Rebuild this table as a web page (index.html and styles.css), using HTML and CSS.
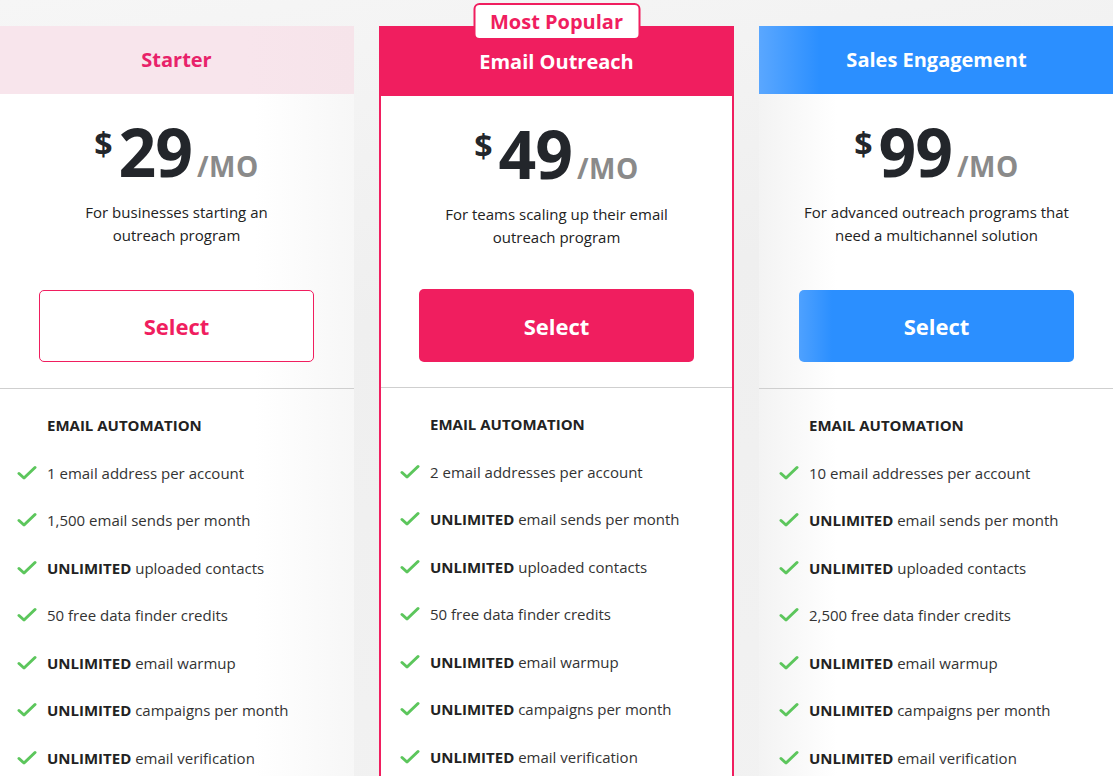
FILE: index.html
```html
<!DOCTYPE html>
<html lang="en">
<head>
    <meta charset="UTF-8">
    <title>Pricing</title>
    <link rel="stylesheet" href="styles.css">
</head>
<body>

<div class="plans">
    <!-- Starter -->
    <div class="plan plan-starter">
        <div class="plan-head">Starter</div>
        <div class="plan-top">
            <div class="price"><span class="cur">$</span><span class="amount">29</span><span class="per">/MO</span></div>
            <p class="desc">For businesses starting an<br>outreach program</p>
            <a class="btn btn-outline" href="#">Select</a>
        </div>
        <ul class="features">
            <li class="feat-title">EMAIL AUTOMATION</li>
            <li><svg class="check" viewBox="0 0 20 16"><polyline points="2,8.5 7,13 18,2.5"/></svg>1 email address per account</li>
            <li><svg class="check" viewBox="0 0 20 16"><polyline points="2,8.5 7,13 18,2.5"/></svg>1,500 email sends per month</li>
            <li><svg class="check" viewBox="0 0 20 16"><polyline points="2,8.5 7,13 18,2.5"/></svg><b>UNLIMITED</b>&nbsp;uploaded contacts</li>
            <li><svg class="check" viewBox="0 0 20 16"><polyline points="2,8.5 7,13 18,2.5"/></svg>50 free data finder credits</li>
            <li><svg class="check" viewBox="0 0 20 16"><polyline points="2,8.5 7,13 18,2.5"/></svg><b>UNLIMITED</b>&nbsp;email warmup</li>
            <li><svg class="check" viewBox="0 0 20 16"><polyline points="2,8.5 7,13 18,2.5"/></svg><b>UNLIMITED</b>&nbsp;campaigns per month</li>
            <li><svg class="check" viewBox="0 0 20 16"><polyline points="2,8.5 7,13 18,2.5"/></svg><b>UNLIMITED</b>&nbsp;email verification</li>
        </ul>
    </div>

    <!-- Email Outreach -->
    <div class="plan plan-popular">
        <div class="badge">Most Popular</div>
        <div class="plan-head">Email Outreach</div>
        <div class="plan-top">
            <div class="price"><span class="cur">$</span><span class="amount">49</span><span class="per">/MO</span></div>
            <p class="desc">For teams scaling up their email<br>outreach program</p>
            <a class="btn btn-pink" href="#">Select</a>
        </div>
        <ul class="features">
            <li class="feat-title">EMAIL AUTOMATION</li>
            <li><svg class="check" viewBox="0 0 20 16"><polyline points="2,8.5 7,13 18,2.5"/></svg>2 email addresses per account</li>
            <li><svg class="check" viewBox="0 0 20 16"><polyline points="2,8.5 7,13 18,2.5"/></svg><b>UNLIMITED</b>&nbsp;email sends per month</li>
            <li><svg class="check" viewBox="0 0 20 16"><polyline points="2,8.5 7,13 18,2.5"/></svg><b>UNLIMITED</b>&nbsp;uploaded contacts</li>
            <li><svg class="check" viewBox="0 0 20 16"><polyline points="2,8.5 7,13 18,2.5"/></svg>50 free data finder credits</li>
            <li><svg class="check" viewBox="0 0 20 16"><polyline points="2,8.5 7,13 18,2.5"/></svg><b>UNLIMITED</b>&nbsp;email warmup</li>
            <li><svg class="check" viewBox="0 0 20 16"><polyline points="2,8.5 7,13 18,2.5"/></svg><b>UNLIMITED</b>&nbsp;campaigns per month</li>
            <li><svg class="check" viewBox="0 0 20 16"><polyline points="2,8.5 7,13 18,2.5"/></svg><b>UNLIMITED</b>&nbsp;email verification</li>
        </ul>
    </div>

    <!-- Sales Engagement -->
    <div class="plan plan-sales">
        <div class="plan-head">Sales Engagement</div>
        <div class="plan-top">
            <div class="price"><span class="cur">$</span><span class="amount">99</span><span class="per">/MO</span></div>
            <p class="desc">For advanced outreach programs that<br>need a multichannel solution</p>
            <a class="btn btn-blue" href="#">Select</a>
        </div>
        <ul class="features">
            <li class="feat-title">EMAIL AUTOMATION</li>
            <li><svg class="check" viewBox="0 0 20 16"><polyline points="2,8.5 7,13 18,2.5"/></svg>10 email addresses per account</li>
            <li><svg class="check" viewBox="0 0 20 16"><polyline points="2,8.5 7,13 18,2.5"/></svg><b>UNLIMITED</b>&nbsp;email sends per month</li>
            <li><svg class="check" viewBox="0 0 20 16"><polyline points="2,8.5 7,13 18,2.5"/></svg><b>UNLIMITED</b>&nbsp;uploaded contacts</li>
            <li><svg class="check" viewBox="0 0 20 16"><polyline points="2,8.5 7,13 18,2.5"/></svg>2,500 free data finder credits</li>
            <li><svg class="check" viewBox="0 0 20 16"><polyline points="2,8.5 7,13 18,2.5"/></svg><b>UNLIMITED</b>&nbsp;email warmup</li>
            <li><svg class="check" viewBox="0 0 20 16"><polyline points="2,8.5 7,13 18,2.5"/></svg><b>UNLIMITED</b>&nbsp;campaigns per month</li>
            <li><svg class="check" viewBox="0 0 20 16"><polyline points="2,8.5 7,13 18,2.5"/></svg><b>UNLIMITED</b>&nbsp;email verification</li>
        </ul>
    </div>
</div>

</body>
</html>
```

FILE: styles.css
```css
/* General */
html, body {
    margin: 0;
    height: 100%;
    overflow: hidden;
}
body {
    background: linear-gradient(170deg, #f6f6f6 0%, #efefef 40%, #f2f2f2 100%);
    font-family: "Open Sans", "Noto Sans", sans-serif;
    color: #222;
}

.plans {
    display: flex;
    gap: 25px;
    margin-left: -1px;
    padding-top: 26px;
}

/* Card */
.plan {
    position: relative;
    flex: 0 0 355px;
    box-sizing: border-box;
    background: #fff;
}
.plan-starter {
    background: linear-gradient(90deg, #fff 0%, #fff 72%, #f7f7f7 100%);
}
.plan-sales {
    background: linear-gradient(90deg, #f3f3f3 0%, #fff 22%, #fff 100%);
}
.plan-popular {
    border: 2px solid #f01e5f;
    border-top: 0;
    padding-top: 2px;
    background: #fff;
}
.plan-popular::before {
    content: "";
    position: absolute;
    top: 0;
    left: -2px;
    right: -2px;
    height: 2px;
    background: #f01e5f;
}

.plan-head {
    height: 68px;
    display: flex;
    align-items: center;
    justify-content: center;
    padding-bottom: 1px;
    box-sizing: border-box;
    font-size: 20px;
    font-weight: 700;
}
.plan-starter .plan-head {
    background: linear-gradient(90deg, #f8e5ec 0%, #f8e5ec 70%, #f6e4ea 100%);
    color: #e8226a;
}
.plan-popular .plan-head {
    background: #f01e5f;
    color: #fff;
}
.plan-sales .plan-head {
    background: linear-gradient(90deg, #5aa7ff 0%, #2b8fff 17%, #2b8fff 100%);
    color: #fff;
}

/* Most popular badge */
.badge {
    position: absolute;
    top: -23px;
    left: 50%;
    transform: translateX(-50%);
    width: 167px;
    height: 37px;
    box-sizing: border-box;
    border: 2px solid #f01e5f;
    border-radius: 6px;
    background: #fff;
    color: #f01e5f;
    font-size: 20px;
    font-weight: 700;
    display: flex;
    align-items: center;
    justify-content: center;
    z-index: 2;
}

/* Price area */
.plan-top {
    padding: 24px 0 26px;
    text-align: center;
    border-bottom: 1px solid #cfcfcf;
}
.plan-popular .plan-top {
    padding-bottom: 25px;
}
.price {
    line-height: 1;
    white-space: nowrap;
    color: #23262b;
    font-weight: 700;
}
.cur {
    display: inline-block;
    vertical-align: top;
    padding-top: 10px;
    margin-right: 6px;
    font-size: 32px;
}
.amount {
    font-size: 66px;
    letter-spacing: -1px;
}
.per {
    margin-left: 5px;
    font-size: 28px;
    letter-spacing: 0.5px;
    color: #8a8a8a;
}
.desc {
    margin: 17px 0 43px;
    font-size: 15px;
    line-height: 23px;
    color: #222;
}
.plan-popular .desc {
    margin-bottom: 40px;
}
.btn {
    display: flex;
    align-items: center;
    justify-content: center;
    width: 275px;
    height: 72px;
    box-sizing: border-box;
    margin: 0 auto;
    border-radius: 5px;
    font-size: 22px;
    font-weight: 700;
    text-decoration: none;
}
.btn-outline {
    border: 1px solid #f01e5f;
    color: #f01e5f;
    background: #fff;
}
.btn-pink {
    height: 73px;
    background: #f01e5f;
    color: #fff;
}
.btn-blue {
    background: linear-gradient(90deg, #4ea1ff 0%, #2b8fff 12%, #2b8fff 100%);
    color: #fff;
}

/* Features */
.features {
    list-style: none;
    margin: 0;
    padding: 12.5px 0 0 18px;
}
.features li {
    display: flex;
    align-items: center;
    height: 47.5px;
    font-size: 15px;
    color: #333;
}
.features li b {
    color: #222;
    font-weight: 700;
}
.features .feat-title {
    padding-left: 30px;
    font-weight: 700;
    color: #222;
}
.plan-popular .features {
    padding-left: 19px;
}
.plan-sales .features {
    padding-left: 20px;
}
.check {
    width: 20px;
    height: 16px;
    margin-right: 10px;
    flex: 0 0 20px;
    fill: none;
    stroke: #5cc65c;
    stroke-width: 3;
    stroke-linecap: round;
    stroke-linejoin: round;
}
```
